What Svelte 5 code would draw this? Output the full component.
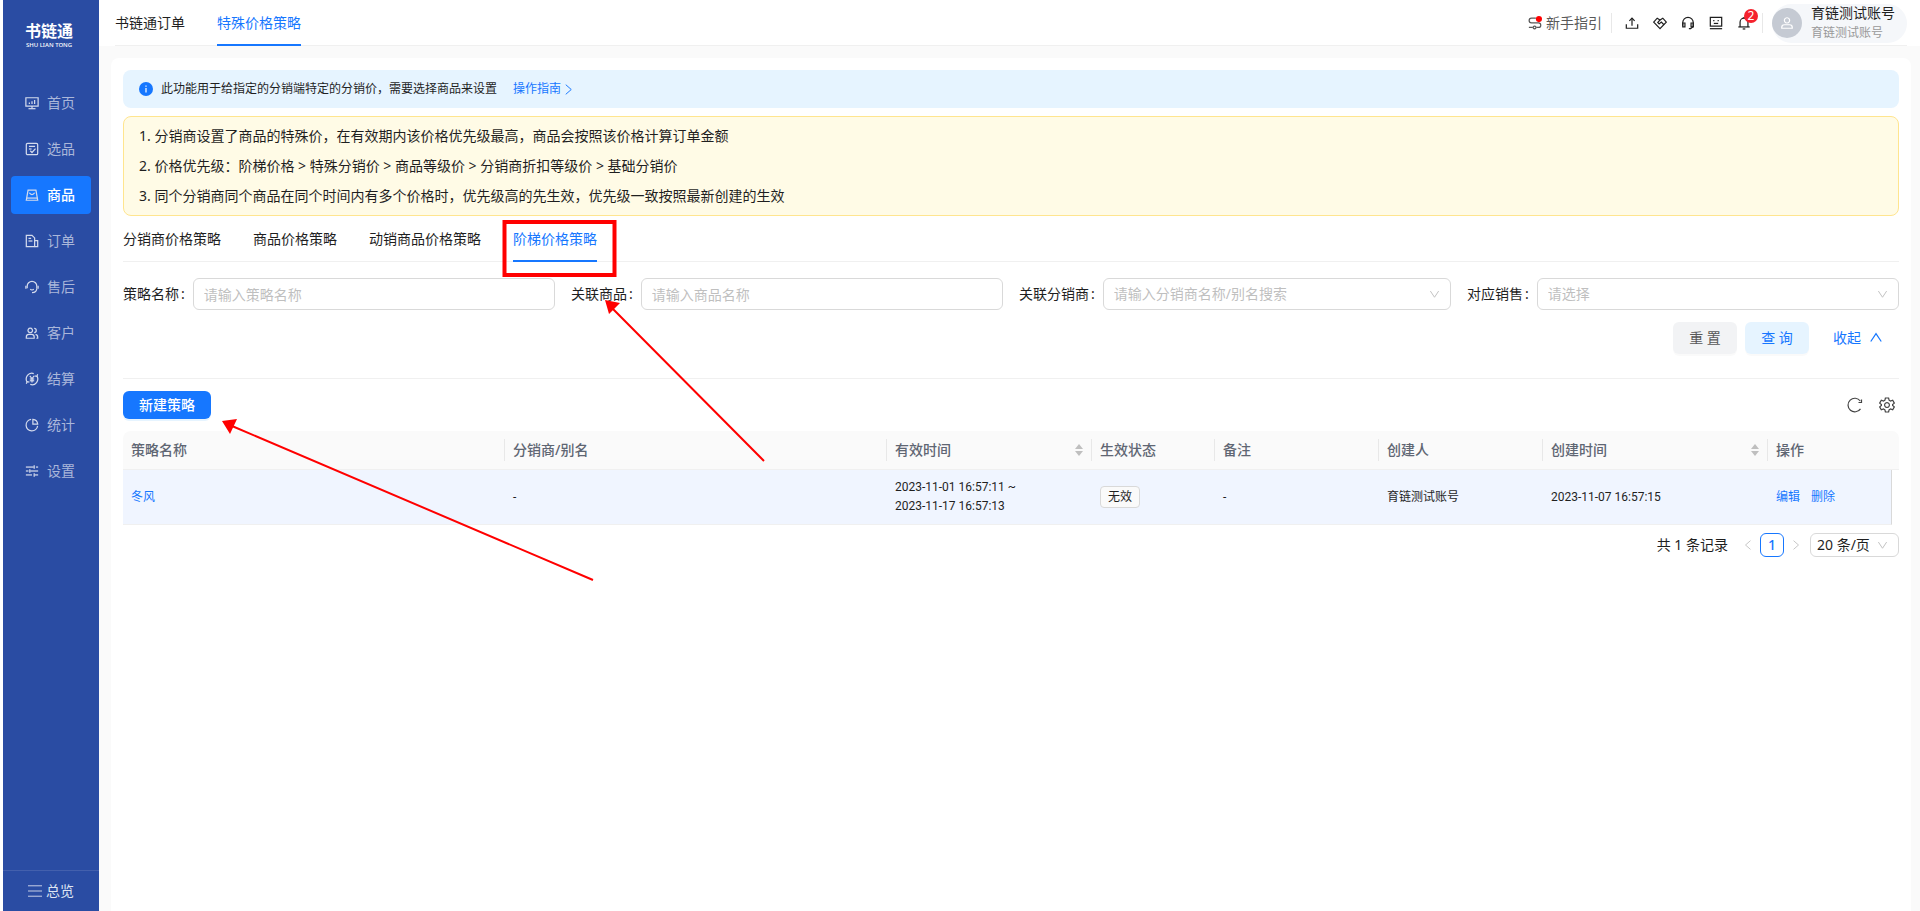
<script>
    const menus = [
        { name: '首页', paths: ['M1 2h14v9.5H1z', 'M8 11.5V14', 'M4 14.5h8', 'M5 7.5v1.5', 'M8 6v3', 'M11 4.5V9'] },
        { name: '选品', paths: ['M3 1.5h10a1.5 1.5 0 0 1 1.5 1.5v10a1.5 1.5 0 0 1-1.5 1.5H3A1.5 1.5 0 0 1 1.5 13V3A1.5 1.5 0 0 1 3 1.5z', 'M4.5 5h7', 'M4.5 8h3', 'M6 10l2 2 4-4.5'] },
        { name: '商品', paths: ['M3.5 2.5h9l2 11.5h-13z', 'M5 5.5c1.5 2.6 4.5 2.6 6 0', 'M2 11.5h12'] },
        { name: '订单', paths: ['M1.5 1.5H8l3 3v10H1.5z', 'M11 7.5h3.5v7H11', 'M4 5h3', 'M4 8h4.5'] },
        { name: '售后', paths: ['M2.5 9.5V7a5.5 5.5 0 0 1 11 0v2.5', 'M1 6.5V10', 'M15 6.5V10', 'M13.5 9.5c0 3-2 5-5.5 5', 'M6 10.5c1 1 3 1 4 0'] },
        { name: '客户', paths: ['M6 2.5a2.6 2.6 0 1 0 .01 0z', 'M1.5 14v-1.5a3 3 0 0 1 3-3h3a3 3 0 0 1 3 3V14z', 'M10.5 2.8a2.3 2.3 0 1 1 0 4.7', 'M12 9.5a3 3 0 0 1 2.5 3V14H13'] },
        { name: '结算', paths: ['M2.5 11.5A6.5 6.5 0 0 1 10 1.8', 'M13.5 4.5A6.5 6.5 0 0 1 6 14.2', 'M1.5 13.5l1-2.5 2.5.5', 'M14.5 2.5l-1 2.5-2.5-.5', 'M5.5 4.5L8 7.5l2.5-3', 'M8 7.5V12', 'M5.5 8h5', 'M5.5 10h5'] },
        { name: '统计', paths: ['M7 1.6A6.6 6.6 0 1 0 14.4 9', 'M9 1.5V7h5.5A6 6 0 0 0 9 1.5z'] },
        { name: '设置', paths: ['M1 3.5h9', 'M12.5 3.5H15', 'M10.5 1.5v4', 'M1 8h3', 'M6 8h9', 'M5.5 6v4', 'M1 12.5h7', 'M11 12.5h4', 'M10.5 10.5v4'] }
    ];

    const tools = [
        { name: '导出', paths: ['M1.5 9.5V14h13V9.5', 'M8 11V2.5', 'M5 5.5l3-3 3 3'] },
        { name: '合作', paths: ['M8 14.5L.8 7l4-4.5L8 4.5l3.2-2 4 4.5z', 'M8 4.5L5.5 7.5 7 9l2.5-2 3 3'] },
        { name: '客服', paths: ['M2 11V7.5a6 6 0 0 1 12 0V12l-3 2.5H9', 'M2 8h2.5v4.5H2z', 'M11.5 8H14v4.5h-2.5z'] },
        { name: '反馈', paths: ['M1.5 1.5h13v10h-13z', 'M1 14.5h14', 'M5.5 4.5V6', 'M10.5 4.5V6', 'M5.5 8.5h5'] },
        { name: '通知', paths: ['M3.5 12.5V7a4.5 4.5 0 0 1 9 0v5.5', 'M1.5 12.5h13', 'M8 1v1.5', 'M6.5 14.8h3'], badge: 2 }
    ];

    const tips = [
        '1. 分销商设置了商品的特殊价，在有效期内该价格优先级最高，商品会按照该价格计算订单金额',
        '2. 价格优先级：阶梯价格 > 特殊分销价 > 商品等级价 > 分销商折扣等级价 > 基础分销价',
        '3. 同个分销商同个商品在同个时间内有多个价格时，优先级高的先生效，优先级一致按照最新创建的生效'
    ];

    const strategyTabs = ['分销商价格策略', '商品价格策略', '动销商品价格策略', '阶梯价格策略'];

    const columns = [
        { title: '策略名称', cls: 'wide' },
        { title: '分销商/别名', cls: 'wide' },
        { title: '有效时间', cls: 'time', sort: true },
        { title: '生效状态', cls: 'status' },
        { title: '备注', cls: 'person' },
        { title: '创建人', cls: 'person' },
        { title: '创建时间', cls: 'created', sort: true }
    ];

    const rows = [
        {
            name: '冬风',
            dealer: '-',
            start: '2023-11-01 16:57:11',
            end: '2023-11-17 16:57:13',
            status: '无效',
            remark: '-',
            creator: '育链测试账号',
            createdAt: '2023-11-07 16:57:15'
        }
    ];

    let activeMenu = $state('商品');
    let activeTab = $state('阶梯价格策略');
    let strategyName = $state('');
    let productName = $state('');

    function reset() {
        strategyName = '';
        productName = '';
    }
</script>

{#snippet icon(paths)}
    <svg class="icon" viewBox="0 0 16 16" aria-hidden="true">
        {#each paths as d}
            <path {d} />
        {/each}
    </svg>
{/snippet}

<div class="layout">
    <aside class="sidebar">
        <div class="logo">
            <strong>书链通</strong>
            <span>SHU LIAN TONG</span>
        </div>
        <nav class="menu">
            {#each menus as menu}
                <button class="menu-item" class:active={menu.name === activeMenu} onclick={() => (activeMenu = menu.name)}>
                    {@render icon(menu.paths)}
                    {menu.name}
                </button>
            {/each}
        </nav>
        <button class="overview">
            {@render icon(['M0 2h16', 'M0 8h16', 'M0 14h16'])}
            总览
        </button>
    </aside>

    <div class="main">
        <header class="header">
            <nav class="page-tabs">
                <a href="#order">书链通订单</a>
                <a href="#price" class="active">特殊价格策略</a>
            </nav>
            <div class="header-right">
                <button class="guide">
                    <svg class="icon" viewBox="0 0 16 16" aria-hidden="true">
                        <path d="M9 2.5H4a2.7 2.7 0 0 0 0 5.400h8a2.600 2.600 0 0 1 0 5.200H9.500M1 13.100h4.500" />
                        <path d="M7.500 11.500a1.600 1.600 0 1 0 .01 0z" />
                        <circle cx="12.500" cy="3.500" r="3.500" />
                    </svg>
                    新手指引
                </button>
                <span class="divider"></span>
                <div class="tools">
                    {#each tools as tool}
                        <button class="tool" aria-label={tool.name}>
                            {@render icon(tool.paths)}
                            {#if tool.badge}
                                <span class="badge">{tool.badge}</span>
                            {/if}
                        </button>
                    {/each}
                </div>
                <span class="divider"></span>
                <div class="user">
                    <span class="avatar">
                        {@render icon(['M8 2a3 3 0 1 0 .01 0z', 'M2 14v-1a3 3 0 0 1 3-3h6a3 3 0 0 1 3 3v1z'])}
                    </span>
                    <div class="user-info">
                        <span class="user-name">育链测试账号</span>
                        <span class="user-sub">育链测试账号</span>
                    </div>
                </div>
            </div>
        </header>

        <main class="panel">
            <div class="alert">
                <svg class="info" viewBox="0 0 14 14" aria-hidden="true">
                    <circle cx="7" cy="7" r="7" />
                    <path d="M7 6v4.500M7 3.500v1.200" />
                </svg>
                <span>此功能用于给指定的分销端特定的分销价，需要选择商品来设置</span>
                <a href="#guide">
                    操作指南
                    {@render icon(['M4 1l8 7-8 7'])}
                </a>
            </div>

            <div class="tips">
                {#each tips as tip}
                    <p>{tip}</p>
                {/each}
            </div>

            <div class="tabs" role="tablist">
                {#each strategyTabs as tab}
                    <button role="tab" aria-selected={tab === activeTab} class:active={tab === activeTab} onclick={() => (activeTab = tab)}>
                        {tab}
                    </button>
                {/each}
            </div>

            <form class="filters" onsubmit={(e) => e.preventDefault()}>
                <div class="field">
                    <label for="strategy">策略名称</label>
                    <input id="strategy" type="text" placeholder="请输入策略名称" bind:value={strategyName} />
                </div>
                <div class="field">
                    <label for="product">关联商品</label>
                    <input id="product" type="text" placeholder="请输入商品名称" bind:value={productName} />
                </div>
                <div class="field">
                    <label for="dealer">关联分销商</label>
                    <div class="select">
                        <select id="dealer">
                            <option>请输入分销商名称/别名搜索</option>
                        </select>
                        {@render icon(['M2 3l6 9 6-9'])}
                    </div>
                </div>
                <div class="field">
                    <label for="sales">对应销售</label>
                    <div class="select">
                        <select id="sales">
                            <option>请选择</option>
                        </select>
                        {@render icon(['M2 3l6 9 6-9'])}
                    </div>
                </div>
                <div class="actions">
                    <button type="button" class="reset" onclick={reset}>重 置</button>
                    <button type="submit" class="query">查 询</button>
                    <button type="button" class="collapse">
                        收起
                        {@render icon(['M2 12l6-9 6 9'])}
                    </button>
                </div>
            </form>

            <div class="toolbar">
                <button class="create">新建策略</button>
                <div class="toolbar-icons">
                    <button aria-label="刷新">
                        {@render icon(['M13.5 11.8A6.8 6.8 0 1 1 13.3 4', 'M14.5 2.5v3h-3'])}
                    </button>
                    <button aria-label="列设置">
                        {@render icon([
                            'M6.400 1h3.200l.5 2.200 1.400.8 2.200-.7 1.600 2.800L13.600 7.600v.8l1.700 1.500-1.600 2.800-2.200-.7-1.400.8L9.600 15H6.400l-.5-2.200L4.500 12l-2.200.7L.7 9.900l1.700-1.500v-.8L.7 6.100l1.600-2.800 2.200.7 1.400-.8z',
                            'M8 5.600a2.400 2.400 0 1 0 .01 0z'
                        ])}
                    </button>
                </div>
            </div>

            <table>
                <thead>
                    <tr>
                        {#each columns as col}
                            <th class={col.cls}>
                                <div class="th">
                                    {col.title}
                                    {#if col.sort}
                                        <svg class="sorter" viewBox="0 0 8 14" aria-hidden="true">
                                            <path d="M4 1l4 5H0zM4 13L0 8h8z" />
                                        </svg>
                                    {/if}
                                </div>
                            </th>
                        {/each}
                        <th class="ops"><div class="th">操作</div></th>
                        <th class="gutter"></th>
                    </tr>
                </thead>
                <tbody>
                    {#each rows as row}
                        <tr>
                            <td><a href="#detail">{row.name}</a></td>
                            <td>{row.dealer}</td>
                            <td>{row.start} ~<br />{row.end}</td>
                            <td><span class="tag">{row.status}</span></td>
                            <td>{row.remark}</td>
                            <td>{row.creator}</td>
                            <td>{row.createdAt}</td>
                            <td class="ops">
                                <a href="#edit">编辑</a>
                                <a href="#delete">删除</a>
                            </td>
                            <td class="gutter"></td>
                        </tr>
                    {/each}
                </tbody>
            </table>

            <div class="pagination">
                <span class="total">共 {rows.length} 条记录</span>
                <button class="arrow" aria-label="上一页">{@render icon(['M12 1L4 8l8 7'])}</button>
                <button class="current">1</button>
                <button class="arrow" aria-label="下一页">{@render icon(['M4 1l8 7-8 7'])}</button>
                <div class="select size">
                    <select aria-label="每页条数">
                        <option>20 条/页</option>
                        <option>50 条/页</option>
                    </select>
                    {@render icon(['M2 3l6 9 6-9'])}
                </div>
            </div>
        </main>
    </div>

    <!-- red callouts lying over the page -->
    <svg class="marks" width="800" height="600" aria-hidden="true">
        <rect x="504.500" y="222" width="110" height="53" />
        <path class="line" d="M764 461L612 308M593 580L232 426" />
        <path class="head" d="M605 300l15 3-11 11zM222 421l15-2-7 15z" />
    </svg>
</div>

<style>
    :global(body) {
        margin: 0;
        background: #fff;
    }

    .layout {
        position: relative;
        display: flex;
        min-height: 100vh;
        padding-left: 3px;
        box-sizing: border-box;
        background: #fff;
        color: #1f1f1f;
        font-family: "Noto Sans", "Noto Sans CJK SC", sans-serif;
        font-size: 14px;
        line-height: 22px;
    }

    button,
    input,
    select {
        font: inherit;
        color: inherit;
        margin: 0;
        box-sizing: border-box;
    }

    button {
        padding: 0;
        border: none;
        background: none;
        cursor: pointer;
    }

    a {
        color: #1677ff;
        text-decoration: none;
    }

    .icon {
        width: 14px;
        height: 14px;
        flex: none;
        fill: none;
        stroke: currentColor;
        stroke-width: 1.4;
    }

    /* sidebar */
    .sidebar {
        width: 96px;
        flex: none;
        display: flex;
        flex-direction: column;
        background: #2a4ca3;
        color: #aab7da;
    }

    .logo {
        display: flex;
        flex-direction: column;
        align-items: center;
        padding: 21px 4px 0 0;
        height: 63px;
        color: #fff;
    }

    .logo strong {
        font-size: 16px;
        line-height: 20px;
    }

    .logo span {
        font-size: 6px;
        font-weight: 500;
        line-height: 8px;
    }

    .menu {
        flex: 1;
        display: flex;
        flex-direction: column;
        gap: 8px;
        padding: 0 8px;
    }

    .menu-item {
        display: flex;
        align-items: center;
        gap: 8px;
        height: 38px;
        padding-left: 14px;
        border-radius: 4px;
    }

    .menu-item .icon {
        color: #d4dbed;
    }

    .menu-item.active {
        background: #1677ff;
        color: #fff;
        font-weight: 500;
    }

    .overview {
        display: flex;
        align-items: center;
        justify-content: center;
        gap: 4px;
        height: 41px;
        border-top: 1px solid #4360ad;
        color: #dfe5f3;
    }

    .overview .icon {
        color: #aab7da;
    }

    /* header */
    .main {
        flex: 1;
        min-width: 0;
        display: flex;
        flex-direction: column;
        background: #fafafa;
    }

    .header {
        display: flex;
        justify-content: space-between;
        height: 46px;
        padding: 0 13px 0 16px;
        background: #fff;
    }

    .page-tabs {
        flex: 1;
        display: flex;
        gap: 32px;
        box-shadow: inset 0 -1px #f0f0f0;
    }

    .page-tabs a {
        line-height: 46px;
        color: #1f1f1f;
    }

    .page-tabs a.active {
        color: #1677ff;
        box-shadow: inset 0 -2px #1677ff;
    }

    .header-right {
        display: flex;
        align-items: center;
        box-shadow: inset 0 -1px #f0f0f0;
    }

    .guide {
        display: flex;
        align-items: center;
        gap: 4px;
        color: #595959;
    }

    .guide circle {
        fill: #f00;
        stroke: none;
    }

    .divider {
        width: 1px;
        height: 20px;
        margin: 0 9px;
        background: #e8e8e8;
    }

    .tools {
        display: flex;
        gap: 14px;
        padding: 0 2px 0 4px;
    }

    .tool {
        position: relative;
        height: 14px;
        display: flex;
    }

    .badge {
        position: absolute;
        top: -7px;
        right: -7px;
        width: 14px;
        height: 14px;
        border-radius: 7px;
        background: #f5222d;
        color: #fff;
        font-size: 12px;
        line-height: 14px;
        text-align: center;
    }

    .user {
        display: flex;
        align-items: center;
        gap: 9px;
        height: 39px;
        padding-right: 12px;
        border-radius: 20px;
        background: #f5f7fa;
    }

    .avatar {
        display: flex;
        align-items: center;
        justify-content: center;
        width: 30px;
        height: 30px;
        border-radius: 50%;
        background: #c5cad3;
        color: #fff;
    }

    .user-info {
        display: flex;
        flex-direction: column;
    }

    .user-name {
        line-height: 20px;
    }

    .user-sub {
        font-size: 12px;
        line-height: 20px;
        color: #999;
    }

    /* content */
    .panel {
        flex: 1;
        margin: 12px 9px 0 12px;
        padding: 12px;
        border-radius: 8px 8px 0 0;
        background: #fff;
    }

    .alert {
        display: flex;
        align-items: center;
        height: 38px;
        padding: 0 16px;
        border-radius: 8px;
        background: #e6f4ff;
        font-size: 12px;
    }

    .info {
        width: 14px;
        height: 14px;
        margin-right: 8px;
        fill: #1677ff;
    }

    .info path {
        stroke: #fff;
        stroke-width: 1.2;
    }

    .alert a {
        display: flex;
        align-items: center;
        gap: 2px;
        margin-left: 16px;
    }

    .alert .icon {
        width: 11px;
        height: 11px;
    }

    .tips {
        margin-top: 8px;
        padding: 4px 15px;
        border: 1px solid #ffe58f;
        border-radius: 8px;
        background: #fffbe6;
    }

    .tips p {
        margin: 0;
        line-height: 30px;
    }

    .tabs {
        display: flex;
        gap: 32px;
        height: 46px;
        box-shadow: inset 0 -1px #f0f0f0;
    }

    .tabs button.active {
        color: #1677ff;
        box-shadow: inset 0 -2px #1677ff;
    }

    .filters {
        display: grid;
        grid-template-columns: repeat(4, 1fr);
        gap: 12px 16px;
        padding: 16px 0 24px;
        border-bottom: 1px solid #f0f0f0;
    }

    .field {
        display: flex;
        align-items: center;
        min-width: 0;
    }

    .field label {
        flex: none;
    }

    .field label::after {
        content: ":";
        margin: 0 8px 0 2px;
    }

    input,
    .field select {
        width: 100%;
        height: 32px;
        padding: 0 10px;
        border: 1px solid #d9d9d9;
        border-radius: 6px;
        background: #fff;
    }

    input {
        min-width: 0;
        flex: 1;
    }

    input::placeholder,
    .field select {
        color: #bfbfbf;
        opacity: 1;
    }

    .select {
        position: relative;
        flex: 1;
        min-width: 0;
    }

    select {
        appearance: none;
    }

    .select .icon {
        position: absolute;
        top: 0;
        bottom: 0;
        right: 11px;
        width: 11px;
        height: 11px;
        margin: auto 0;
        color: #bfbfbf;
        pointer-events: none;
    }

    .actions {
        grid-column: 1 / -1;
        display: flex;
        justify-content: flex-end;
        gap: 8px;
    }

    .actions button {
        height: 32px;
        min-width: 64px;
        border-radius: 6px;
        box-shadow: 0 2px 0 rgba(0, 0, 0, 0.02);
    }

    .actions .reset {
        background: #f2f3f5;
        color: #595959;
    }

    .actions .query {
        background: #e6f4ff;
        color: #1677ff;
    }

    .actions .collapse {
        display: flex;
        align-items: center;
        gap: 8px;
        padding: 0 16px;
        box-shadow: none;
        color: #1677ff;
    }

    .toolbar {
        display: flex;
        align-items: center;
        justify-content: space-between;
        padding: 12px 0;
    }

    .create {
        height: 28px;
        padding: 0 16px;
        border-radius: 6px;
        background: #1677ff;
        box-shadow: 0 2px 0 rgba(5, 145, 255, 0.1);
        color: #fff;
        font-weight: 500;
    }

    .toolbar-icons {
        display: flex;
        gap: 16px;
        padding-right: 4px;
        color: #434343;
    }

    .toolbar-icons button {
        display: flex;
    }

    .toolbar-icons .icon {
        width: 16px;
        height: 16px;
        stroke-width: 1.2;
    }

    /* table */
    table {
        width: 100%;
        table-layout: fixed;
        border-collapse: separate;
        border-spacing: 0;
    }

    th {
        height: 38px;
        padding: 0;
        border-bottom: 1px solid #f0f0f0;
        background: #fafafa;
        color: #5f6673;
        font-weight: 500;
        text-align: left;
    }

    th:first-child {
        border-radius: 8px 0 0 0;
    }

    th:last-child {
        border-radius: 0 8px 0 0;
    }

    .th {
        display: flex;
        align-items: center;
        justify-content: space-between;
        padding: 0 8px;
        border-right: 1px solid #e8e8e8;
    }

    .ops .th {
        border-right: none;
    }

    .wide {
        width: 382px;
    }

    .time {
        width: 205px;
    }

    .status {
        width: 123px;
    }

    .person {
        width: 164px;
    }

    .created {
        width: 225px;
    }

    .gutter {
        width: 7px;
    }

    .sorter {
        width: 8px;
        height: 14px;
        fill: #bfbfbf;
    }

    td {
        padding: 8px;
        border-bottom: 1px solid #f0f0f0;
        background: #f0f5ff;
        font-family: Roboto, "Noto Sans CJK SC", sans-serif;
        font-size: 12px;
        line-height: 19px;
    }

    td.ops {
        border-right: 1px solid #d9d9d9;
    }

    td.ops a {
        margin-right: 8px;
    }

    td.gutter {
        padding: 0;
        border: none;
        background: #fff;
    }

    .tag {
        display: inline-block;
        padding: 0 7px;
        border: 1px solid #d9d9d9;
        border-radius: 4px;
        background: #fafafa;
        line-height: 20px;
    }

    .pagination {
        display: flex;
        align-items: center;
        justify-content: flex-end;
        margin-top: 8px;
    }

    .total {
        margin-right: 8px;
    }

    .pagination button {
        width: 24px;
        height: 24px;
    }

    .pagination .arrow {
        display: flex;
        align-items: center;
        justify-content: center;
        color: #bfbfbf;
    }

    .arrow .icon {
        width: 10px;
        height: 10px;
    }

    .pagination .current {
        border: 1px solid #1677ff;
        border-radius: 6px;
        color: #1677ff;
        font-weight: 500;
    }

    .size {
        flex: none;
        margin-left: 2px;
    }

    .size select {
        width: 89px;
        height: 24px;
        padding: 0 6px;
        border: 1px solid #d9d9d9;
        border-radius: 6px;
        background: #fff;
    }

    .marks {
        position: absolute;
        top: 0;
        left: 0;
        pointer-events: none;
        fill: none;
        stroke: #f00;
    }

    .marks rect {
        stroke-width: 4;
    }

    .marks .line {
        stroke-width: 2;
    }

    .marks .head {
        fill: #f00;
        stroke: none;
    }
</style>
